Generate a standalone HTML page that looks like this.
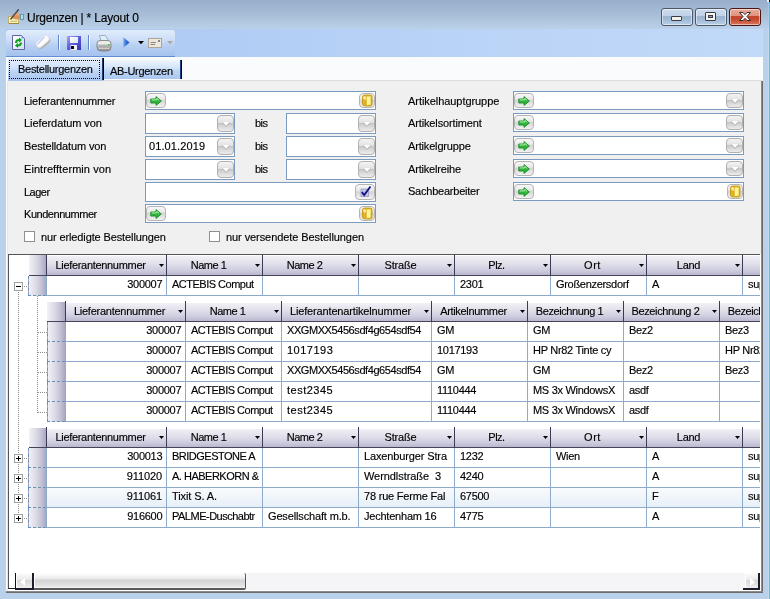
<!DOCTYPE html><html><head><meta charset="utf-8"><style>
*{margin:0;padding:0;box-sizing:border-box}
html,body{width:770px;height:599px;overflow:hidden;background:#b9d1ea;font-family:"Liberation Sans",sans-serif;font-size:11px}
.t{position:absolute;white-space:nowrap;line-height:13px;height:13px;will-change:transform;-webkit-text-stroke:0.15px #000}
.a{position:absolute}
svg.a{overflow:visible}
.inp{position:absolute;background:#fff;border:1px solid #7a9ac0}
.gbtn{position:absolute;width:20px;height:15px;border:1px solid #b4b4b4;border-radius:4px;background:linear-gradient(#f8f8f8,#e8e8e8 40%,#d4d4d4 50%,#ececec 90%,#f4f4f4)}
.dbtn{position:absolute;width:16px;height:17px;border:1px solid #b0b0b0;border-radius:4px;background:linear-gradient(#f4f4f4,#e2e2e2 44%,#c6c6c6 50%,#d8d8d8 70%,#ececec)}
</style></head><body>
<div class="a" style="left:0px;top:0px;width:770px;height:29px;background:linear-gradient(#97afcb,#a6bcd6 45%,#bad1e9)"></div>
<div class="a" style="left:768px;top:0px;width:1px;height:599px;background:linear-gradient(#a4bcd6,#bcd2ea 28px,#cbd8ea 30px)"></div>
<div class="a" style="left:769px;top:0px;width:1px;height:599px;background:#40c8ee"></div>
<div class="a" style="left:767px;top:0px;width:3px;height:2px;background:#e8f8ff"></div>
<div class="a" style="left:769px;top:0px;width:1px;height:2px;background:#000"></div>
<svg class="a" style="left:4px;top:4px" width="24" height="24" viewBox="0 0 24 24">
<rect x="4.5" y="12.5" width="10" height="7" fill="#f6efb0" stroke="#c0b070"/>
<path d="M5 19.5 H15" stroke="#9a8a40"/>
<path d="M6.5 17.3 H13" stroke="#c8b878"/>
<rect x="16.5" y="10.5" width="3" height="5" fill="#b0e0f0" stroke="#6a9aaa"/>
<path d="M7.5 12.5 Q9 9 12 9 L16 10 V15 L12 15.5 Q9.5 15 7.5 13.5Z" fill="#e0905a"/>
<path d="M10 11 Q12 10 15 11" stroke="#f4c090" fill="none"/>
<path d="M6.6 15.4 L14.6 5.4" stroke="#2a2a2a" stroke-width="1.3"/>
<path d="M7.5 14 L13 7" stroke="#8a8a8a" stroke-width=".5"/>
</svg>
<div class="t" style="left:27px;top:12px;font-size:12px;color:#000;letter-spacing:-0.200px;">Urgenzen | * Layout 0</div>
<div class="a" style="left:661px;top:8px;width:32px;height:18px;border:1px solid #4c5868;border-radius:3px;background:linear-gradient(#cddcee,#bfd1e7 45%,#99b3cf 47%,#a3bcd7 70%,#bbd0e7);box-shadow:inset 0 0 0 1px rgba(255,255,255,.5)"></div>
<div class="a" style="left:695px;top:8px;width:32px;height:18px;border:1px solid #4c5868;border-radius:3px;background:linear-gradient(#cddcee,#bfd1e7 45%,#99b3cf 47%,#a3bcd7 70%,#bbd0e7);box-shadow:inset 0 0 0 1px rgba(255,255,255,.5)"></div>
<div class="a" style="left:729px;top:8px;width:32px;height:18px;border:1px solid #4a1616;border-radius:3px;background:linear-gradient(#eaab9c,#e0907c 45%,#c2432a 47%,#c44a30 65%,#d9785e);box-shadow:inset 0 0 0 1px rgba(255,255,255,.5)"></div>
<div class="a" style="left:671px;top:16px;width:11px;height:5px;background:#f4f2ec;border:1px solid #3a3a46;border-radius:1px"></div>
<div class="a" style="left:705px;top:12px;width:11px;height:9px;border:1px solid #3a3a46;border-radius:1px;background:#f4f2ec"><div style="position:absolute;left:2px;top:2px;width:5px;height:3px;background:#8aa0bc;border:1px solid #3a3a46"></div></div>
<svg class="a" style="left:738px;top:11px" width="14" height="11" viewBox="0 0 14 11">
<path d="M1.5 1.5 H5 L7 3.6 L9 1.5 H12.5 L9 5.5 L12.5 9.5 H9 L7 7.4 L5 9.5 H1.5 L5 5.5 Z" fill="#f8f4f2" stroke="#3a2a2a" stroke-width="1" stroke-linejoin="round"/>
</svg>
<div class="a" style="left:6px;top:29px;width:757px;height:28px;background:linear-gradient(90deg,#a8c5f2,#b2cdf5 30%,#bcd5f7 70%,#c2d9f8)"></div>
<div class="a" style="left:6px;top:30px;width:169px;height:27px;background:linear-gradient(#e2edfc,#cfdff8 35%,#b8d0f3 60%,#a4c2ee);border-radius:3px 3px 0 0;border-bottom:1px solid #5f8fd0"></div>
<svg class="a" style="left:12px;top:35px" width="14" height="16" viewBox="0 0 14 16">
<defs><linearGradient id="dg" x1="0" y1="0" x2="1" y2="1"><stop offset="0" stop-color="#ffffff"/><stop offset="1" stop-color="#cfe0f6"/></linearGradient></defs>
<path d="M.5 .5 H9.5 L12.5 3.5 V14.5 H.5 Z" fill="url(#dg)" stroke="#6464a0"/>
<path d="M9.5 .5 L12.5 3.5 H9.5Z" fill="#6aa0e0"/>
<path d="M3 8 Q3 4 7 4 V2.5 L10 5 L7 7.5 V6 Q5 6 5 8Z" fill="#10a018"/>
<path d="M10 7.5 Q10 11.5 6 11.5 V13 L3 10.5 L6 8 V9.5 Q8 9.5 8 7.5Z" fill="#10a018"/>
</svg>
<svg class="a" style="left:36px;top:36px" width="15" height="13" viewBox="0 0 15 13">
<g transform="rotate(-40 7.5 6.5)"><rect x="0" y="2.5" width="15" height="8" rx="3.8" fill="#b4b4b4"/><rect x="0" y="2" width="15" height="6.5" rx="3.2" fill="#fbfbfb" stroke="#d4d4d4" stroke-width=".5"/></g>
<path d="M1.2 8.6 L8.2 1.2" stroke="#5a7ae0" stroke-width=".6"/>
</svg>
<div class="a" style="left:58px;top:35px;width:1px;height:15px;background:#5f88c8;box-shadow:1px 0 0 #f4f8ff"></div>
<svg class="a" style="left:67px;top:36px" width="14" height="14" viewBox="0 0 14 14">
<defs><linearGradient id="fg" x1="0" y1="0" x2="1" y2="1"><stop offset="0" stop-color="#a8a8f4"/><stop offset=".45" stop-color="#6060dc"/><stop offset="1" stop-color="#3434b0"/></linearGradient>
<linearGradient id="lg" x1="0" y1="0" x2="1" y2="1"><stop offset="0" stop-color="#ffffff"/><stop offset="1" stop-color="#d8e4f4"/></linearGradient></defs>
<rect x="0" y="0" width="14" height="14" fill="url(#fg)"/>
<rect x="3" y="1" width="8" height="6" fill="url(#lg)"/>
<rect x="3.5" y="9" width="6.5" height="5" fill="#f0f0f4"/>
<rect x="4" y="10" width="3" height="3" fill="#080818"/>
</svg>
<div class="a" style="left:88px;top:35px;width:1px;height:15px;background:#5f88c8;box-shadow:1px 0 0 #f4f8ff"></div>
<svg class="a" style="left:96px;top:35px" width="16" height="17" viewBox="0 0 16 17">
<defs><linearGradient id="prg" x1="0" y1="0" x2="0" y2="1"><stop offset="0" stop-color="#f4f4f4"/><stop offset=".5" stop-color="#c4c4c4"/><stop offset="1" stop-color="#8c8c8c"/></linearGradient></defs>
<path d="M3.5 .5 H9.5 L12.5 6 H5 Z" fill="#dceefa" stroke="#8ca4b8" stroke-width=".8"/>
<path d="M1 8.5 Q1 5.5 4 5.5 H12 Q15 5.5 15 8.5 V12 Q15 16 11 16 H5 Q1 16 1 12 Z" fill="url(#prg)" stroke="#7a7a7a" stroke-width=".8"/>
<path d="M2 8.2 H14" stroke="#fafafa" stroke-width="1"/>
<path d="M2.5 11 H13.5" stroke="#9a9a9a" stroke-width=".8"/>
<path d="M2.5 13.5 H13.5" stroke="#d8d8d8" stroke-width=".8"/>
<rect x="12" y="9" width="1.6" height="1.4" fill="#30c040"/>
</svg>
<svg class="a" style="left:123px;top:37px" width="7" height="11" viewBox="0 0 7 11">
<defs><linearGradient id="pg" x1="0" y1="0" x2="1" y2="0"><stop offset="0" stop-color="#9cc8f8"/><stop offset=".4" stop-color="#3a78e0"/><stop offset="1" stop-color="#2048c0"/></linearGradient></defs>
<path d="M0 0 L6.5 5.5 L0 11 Z" fill="url(#pg)"/>
</svg>
<svg class="a" style="left:138px;top:41px" width="6" height="4" viewBox="0 0 6 4"><path d="M0 0H6L3 3.2Z" fill="#000"/></svg>
<svg class="a" style="left:148px;top:38px" width="14" height="10" viewBox="0 0 14 10">
<rect x=".5" y=".5" width="13" height="9" fill="#ece8dc" stroke="#aaa69a"/>
<path d="M2.5 4.5 H8 M2.5 6.5 H7" stroke="#8c8880"/>
<rect x="10" y="2" width="2" height="2" fill="#8c8880"/>
</svg>
<svg class="a" style="left:167px;top:41px" width="6" height="4" viewBox="0 0 6 4"><path d="M0 0H6L3 3.2Z" fill="#a8a8a8"/></svg>
<div class="a" style="left:6px;top:57px;width:757px;height:24px;background:#fafbfd"></div>
<div class="a" style="left:104px;top:80px;width:658px;height:1px;background:#dcdcdc"></div>
<div class="a" style="left:8px;top:58px;width:96px;height:23px;background:linear-gradient(#e8f0fc,#d0e1f8 40%,#bcd4f4 60%,#a8c6f0)"></div>
<div class="a" style="left:102px;top:58px;width:1px;height:22px;background:#1c3c70"></div>
<div class="a" style="left:103px;top:58px;width:1px;height:22px;background:#000"></div>
<div class="a" style="left:9px;top:60px;width:91px;height:19px;border:1px dotted #000"></div>
<div class="t" style="left:18px;top:63px;font-size:11px;color:#000;letter-spacing:-0.286px;">Bestellurgenzen</div>
<div class="a" style="left:104px;top:60px;width:76px;height:19px;background:linear-gradient(#f0f6fe,#d4e4f9 40%,#bcd4f4 60%,#aac7f0)"></div>
<div class="a" style="left:180px;top:60px;width:1px;height:19px;background:#1c3c80"></div>
<div class="a" style="left:181px;top:60px;width:1px;height:19px;background:#000"></div>
<div class="t" style="left:110px;top:65px;font-size:11px;color:#000;letter-spacing:-0.300px;">AB-Urgenzen</div>
<div class="a" style="left:6px;top:81px;width:757px;height:512px;background:#f0f0f0"></div>
<div class="a" style="left:6px;top:81px;width:1px;height:512px;background:#fcfcfc"></div>
<div class="a" style="left:7px;top:81px;width:1px;height:510px;background:#e6e6e6"></div>
<div class="a" style="left:761px;top:81px;width:1px;height:512px;background:#8c8c8c"></div>
<div class="a" style="left:762px;top:81px;width:1px;height:512px;background:#6a6a6a"></div>
<div class="a" style="left:6px;top:591px;width:757px;height:1px;background:#8a8a8a"></div>
<div class="a" style="left:6px;top:592px;width:757px;height:1px;background:#6c6c6c"></div>
<div class="t" style="left:24px;top:95px;font-size:11px;color:#000;letter-spacing:-0.250px;">Lieferantennummer</div>
<div class="t" style="left:24px;top:117px;font-size:11px;color:#000;letter-spacing:-0.071px;">Lieferdatum von</div>
<div class="t" style="left:24px;top:140px;font-size:11px;color:#000;letter-spacing:-0.133px;">Bestelldatum von</div>
<div class="t" style="left:24px;top:163px;font-size:11px;color:#000;letter-spacing:0.059px;">Eintrefftermin von</div>
<div class="t" style="left:24px;top:186px;font-size:11px;color:#000;letter-spacing:-0.500px;">Lager</div>
<div class="t" style="left:24px;top:208px;font-size:11px;color:#000;letter-spacing:-0.455px;">Kundennummer</div>
<div class="t" style="left:408px;top:95px;font-size:11px;color:#000;letter-spacing:-0.059px;">Artikelhauptgruppe</div>
<div class="t" style="left:408px;top:117px;font-size:11px;color:#000;letter-spacing:-0.133px;">Artikelsortiment</div>
<div class="t" style="left:408px;top:140px;font-size:11px;color:#000;letter-spacing:-0.167px;">Artikelgruppe</div>
<div class="t" style="left:408px;top:163px;font-size:11px;color:#000;letter-spacing:-0.182px;">Artikelreihe</div>
<div class="t" style="left:408px;top:185px;font-size:11px;color:#000;letter-spacing:-0.231px;">Sachbearbeiter</div>
<div class="inp" style="left:145px;top:91px;width:231px;height:19px"></div>
<div class="gbtn" style="left:146px;top:93px"></div>
<svg class="a" style="left:150px;top:96px" width="12" height="10" viewBox="0 0 12 10">
<path d="M.8 3 H6 V.6 L11.3 5 L6 9.4 V7 H.8 Z" fill="#30b43c" stroke="#1a8a26" stroke-width=".9" stroke-linejoin="round"/>
<path d="M1.6 3.9 H6.8 V2.4 L9.2 4.4" stroke="#b0f4b0" stroke-width="1" fill="none"/>
</svg>
<div class="gbtn" style="left:359px;top:93px;width:16px"></div>
<svg class="a" style="left:361px;top:94px" width="12" height="13" viewBox="0 0 12 13">
<path d="M1.5 3 Q1.5 1 3.5 1 H9.5 Q11 1 11 2.5 V10.5 Q11 12 9.5 12 H4 Q1.5 12 1.5 10Z" fill="#e4b41c" stroke="#c09012" stroke-width=".8"/>
<path d="M5.2 2.8 L9.6 2.2 V10.6 L5.2 11.2Z" fill="#fff69a"/>
<path d="M2 3.2 Q3 1.6 5.2 2.8 V6 L3.6 5.6 Q2.4 4.6 2 3.2Z" fill="#fff2b0"/>
<path d="M5.2 2.8 V11.2" stroke="#c89818" stroke-width=".7"/>
</svg>
<div class="inp" style="left:145px;top:113px;width:90px;height:21px"></div>
<div class="dbtn" style="left:217px;top:115px;width:17px;height:17px"></div>
<svg class="a" style="left:222px;top:122px" width="8" height="5" viewBox="0 0 8 5"><path d="M-.3 .3H8.3L4 4.9Z" fill="#a8a8a8" opacity=".7"/><path d="M.5 0H7.5L4 3.8Z" fill="#ffffff"/></svg>
<div class="t" style="left:255px;top:117px;font-size:11px;color:#000;letter-spacing:-0.500px;">bis</div>
<div class="inp" style="left:286px;top:113px;width:90px;height:21px"></div>
<div class="dbtn" style="left:358px;top:115px;width:17px;height:17px"></div>
<svg class="a" style="left:363px;top:122px" width="8" height="5" viewBox="0 0 8 5"><path d="M-.3 .3H8.3L4 4.9Z" fill="#a8a8a8" opacity=".7"/><path d="M.5 0H7.5L4 3.8Z" fill="#ffffff"/></svg>
<div class="inp" style="left:145px;top:136px;width:90px;height:21px"></div>
<div class="dbtn" style="left:217px;top:138px;width:17px;height:17px"></div>
<svg class="a" style="left:222px;top:145px" width="8" height="5" viewBox="0 0 8 5"><path d="M-.3 .3H8.3L4 4.9Z" fill="#a8a8a8" opacity=".7"/><path d="M.5 0H7.5L4 3.8Z" fill="#ffffff"/></svg>
<div class="t" style="left:255px;top:140px;font-size:11px;color:#000;letter-spacing:-0.500px;">bis</div>
<div class="inp" style="left:286px;top:136px;width:90px;height:21px"></div>
<div class="dbtn" style="left:358px;top:138px;width:17px;height:17px"></div>
<svg class="a" style="left:363px;top:145px" width="8" height="5" viewBox="0 0 8 5"><path d="M-.3 .3H8.3L4 4.9Z" fill="#a8a8a8" opacity=".7"/><path d="M.5 0H7.5L4 3.8Z" fill="#ffffff"/></svg>
<div class="inp" style="left:145px;top:159px;width:90px;height:21px"></div>
<div class="dbtn" style="left:217px;top:161px;width:17px;height:17px"></div>
<svg class="a" style="left:222px;top:168px" width="8" height="5" viewBox="0 0 8 5"><path d="M-.3 .3H8.3L4 4.9Z" fill="#a8a8a8" opacity=".7"/><path d="M.5 0H7.5L4 3.8Z" fill="#ffffff"/></svg>
<div class="t" style="left:255px;top:163px;font-size:11px;color:#000;letter-spacing:-0.500px;">bis</div>
<div class="inp" style="left:286px;top:159px;width:90px;height:21px"></div>
<div class="dbtn" style="left:358px;top:161px;width:17px;height:17px"></div>
<svg class="a" style="left:363px;top:168px" width="8" height="5" viewBox="0 0 8 5"><path d="M-.3 .3H8.3L4 4.9Z" fill="#a8a8a8" opacity=".7"/><path d="M.5 0H7.5L4 3.8Z" fill="#ffffff"/></svg>
<div class="t" style="left:149px;top:140px;font-size:11px;color:#000;letter-spacing:0.111px;">01.01.2019</div>
<div class="inp" style="left:145px;top:182px;width:231px;height:20px"></div>
<div class="gbtn" style="left:355px;top:184px;width:20px;height:16px"></div>
<svg class="a" style="left:360px;top:185px" width="12" height="12" viewBox="0 0 12 12">
<rect x="1" y="4" width="7.5" height="7.5" fill="#c4c4dc" stroke="#9a9ac0" stroke-width=".8"/>
<path d="M1.8 7.2 L4.2 10 L10.5 1.5" stroke="#14148a" stroke-width="1.9" fill="none"/>
</svg>
<div class="inp" style="left:145px;top:204px;width:231px;height:19px"></div>
<div class="gbtn" style="left:146px;top:206px"></div>
<svg class="a" style="left:150px;top:209px" width="12" height="10" viewBox="0 0 12 10">
<path d="M.8 3 H6 V.6 L11.3 5 L6 9.4 V7 H.8 Z" fill="#30b43c" stroke="#1a8a26" stroke-width=".9" stroke-linejoin="round"/>
<path d="M1.6 3.9 H6.8 V2.4 L9.2 4.4" stroke="#b0f4b0" stroke-width="1" fill="none"/>
</svg>
<div class="gbtn" style="left:359px;top:206px;width:16px"></div>
<svg class="a" style="left:361px;top:207px" width="12" height="13" viewBox="0 0 12 13">
<path d="M1.5 3 Q1.5 1 3.5 1 H9.5 Q11 1 11 2.5 V10.5 Q11 12 9.5 12 H4 Q1.5 12 1.5 10Z" fill="#e4b41c" stroke="#c09012" stroke-width=".8"/>
<path d="M5.2 2.8 L9.6 2.2 V10.6 L5.2 11.2Z" fill="#fff69a"/>
<path d="M2 3.2 Q3 1.6 5.2 2.8 V6 L3.6 5.6 Q2.4 4.6 2 3.2Z" fill="#fff2b0"/>
<path d="M5.2 2.8 V11.2" stroke="#c89818" stroke-width=".7"/>
</svg>
<div class="inp" style="left:513px;top:91px;width:231px;height:19px"></div>
<div class="gbtn" style="left:514px;top:93px"></div>
<svg class="a" style="left:518px;top:96px" width="12" height="10" viewBox="0 0 12 10">
<path d="M.8 3 H6 V.6 L11.3 5 L6 9.4 V7 H.8 Z" fill="#30b43c" stroke="#1a8a26" stroke-width=".9" stroke-linejoin="round"/>
<path d="M1.6 3.9 H6.8 V2.4 L9.2 4.4" stroke="#b0f4b0" stroke-width="1" fill="none"/>
</svg>
<div class="dbtn" style="left:726px;top:93px;width:17px;height:15px"></div>
<svg class="a" style="left:731px;top:99px" width="8" height="5" viewBox="0 0 8 5"><path d="M-.3 .3H8.3L4 4.9Z" fill="#a8a8a8" opacity=".7"/><path d="M.5 0H7.5L4 3.8Z" fill="#ffffff"/></svg>
<div class="inp" style="left:513px;top:113px;width:231px;height:19px"></div>
<div class="gbtn" style="left:514px;top:115px"></div>
<svg class="a" style="left:518px;top:118px" width="12" height="10" viewBox="0 0 12 10">
<path d="M.8 3 H6 V.6 L11.3 5 L6 9.4 V7 H.8 Z" fill="#30b43c" stroke="#1a8a26" stroke-width=".9" stroke-linejoin="round"/>
<path d="M1.6 3.9 H6.8 V2.4 L9.2 4.4" stroke="#b0f4b0" stroke-width="1" fill="none"/>
</svg>
<div class="dbtn" style="left:726px;top:115px;width:17px;height:15px"></div>
<svg class="a" style="left:731px;top:121px" width="8" height="5" viewBox="0 0 8 5"><path d="M-.3 .3H8.3L4 4.9Z" fill="#a8a8a8" opacity=".7"/><path d="M.5 0H7.5L4 3.8Z" fill="#ffffff"/></svg>
<div class="inp" style="left:513px;top:136px;width:231px;height:19px"></div>
<div class="gbtn" style="left:514px;top:138px"></div>
<svg class="a" style="left:518px;top:141px" width="12" height="10" viewBox="0 0 12 10">
<path d="M.8 3 H6 V.6 L11.3 5 L6 9.4 V7 H.8 Z" fill="#30b43c" stroke="#1a8a26" stroke-width=".9" stroke-linejoin="round"/>
<path d="M1.6 3.9 H6.8 V2.4 L9.2 4.4" stroke="#b0f4b0" stroke-width="1" fill="none"/>
</svg>
<div class="dbtn" style="left:726px;top:138px;width:17px;height:15px"></div>
<svg class="a" style="left:731px;top:144px" width="8" height="5" viewBox="0 0 8 5"><path d="M-.3 .3H8.3L4 4.9Z" fill="#a8a8a8" opacity=".7"/><path d="M.5 0H7.5L4 3.8Z" fill="#ffffff"/></svg>
<div class="inp" style="left:513px;top:159px;width:231px;height:19px"></div>
<div class="gbtn" style="left:514px;top:161px"></div>
<svg class="a" style="left:518px;top:164px" width="12" height="10" viewBox="0 0 12 10">
<path d="M.8 3 H6 V.6 L11.3 5 L6 9.4 V7 H.8 Z" fill="#30b43c" stroke="#1a8a26" stroke-width=".9" stroke-linejoin="round"/>
<path d="M1.6 3.9 H6.8 V2.4 L9.2 4.4" stroke="#b0f4b0" stroke-width="1" fill="none"/>
</svg>
<div class="dbtn" style="left:726px;top:161px;width:17px;height:15px"></div>
<svg class="a" style="left:731px;top:167px" width="8" height="5" viewBox="0 0 8 5"><path d="M-.3 .3H8.3L4 4.9Z" fill="#a8a8a8" opacity=".7"/><path d="M.5 0H7.5L4 3.8Z" fill="#ffffff"/></svg>
<div class="inp" style="left:513px;top:182px;width:231px;height:19px"></div>
<div class="gbtn" style="left:514px;top:184px"></div>
<svg class="a" style="left:518px;top:187px" width="12" height="10" viewBox="0 0 12 10">
<path d="M.8 3 H6 V.6 L11.3 5 L6 9.4 V7 H.8 Z" fill="#30b43c" stroke="#1a8a26" stroke-width=".9" stroke-linejoin="round"/>
<path d="M1.6 3.9 H6.8 V2.4 L9.2 4.4" stroke="#b0f4b0" stroke-width="1" fill="none"/>
</svg>
<div class="gbtn" style="left:727px;top:184px;width:16px"></div>
<svg class="a" style="left:729px;top:185px" width="12" height="13" viewBox="0 0 12 13">
<path d="M1.5 3 Q1.5 1 3.5 1 H9.5 Q11 1 11 2.5 V10.5 Q11 12 9.5 12 H4 Q1.5 12 1.5 10Z" fill="#e4b41c" stroke="#c09012" stroke-width=".8"/>
<path d="M5.2 2.8 L9.6 2.2 V10.6 L5.2 11.2Z" fill="#fff69a"/>
<path d="M2 3.2 Q3 1.6 5.2 2.8 V6 L3.6 5.6 Q2.4 4.6 2 3.2Z" fill="#fff2b0"/>
<path d="M5.2 2.8 V11.2" stroke="#c89818" stroke-width=".7"/>
</svg>
<div class="a" style="left:24px;top:231px;width:11px;height:11px;background:#fff;border:1px solid #8e8f8f"></div>
<div class="t" style="left:41px;top:231px;font-size:11px;color:#000;letter-spacing:-0.120px;">nur erledigte Bestellungen</div>
<div class="a" style="left:209px;top:231px;width:11px;height:11px;background:#fff;border:1px solid #8e8f8f"></div>
<div class="t" style="left:226px;top:231px;font-size:11px;color:#000;letter-spacing:-0.077px;">nur versendete Bestellungen</div>
<div class="a" style="left:8px;top:254px;width:753px;height:337px;background:#fff"></div>
<div class="a" style="left:8px;top:254px;width:752px;height:1px;background:#555"></div>
<div class="a" style="left:8px;top:254px;width:1px;height:335px;background:#555"></div>
<div class="a" style="left:0;top:0;width:760px;height:588px;overflow:hidden">
<div class="a" style="left:29px;top:255px;width:17px;height:20px;background:linear-gradient(90deg,#f2f1f7,#dcdbe7 40%,#c2c0d4 75%,#a9a7c0)"></div>
<div class="a" style="left:46px;top:255px;width:120px;height:20px;background:linear-gradient(#f4f3f8,#e0dfea 45%,#cfcde0 75%,#bab8ce);box-shadow:inset 1px 1px 0 #fff"></div>
<div class="a" style="left:46px;top:255px;width:1px;height:20px;background:#3c3b56"></div>
<div class="t" style="left:46px;width:109px;text-align:center;top:259px;font-size:11px;color:#000;letter-spacing:-0.312px;">Lieferantennummer</div>
<svg class="a" style="left:159px;top:264px" width="5" height="3" viewBox="0 0 5 3"><path d="M0 0H5L2.5 3Z" fill="#000"/></svg>
<div class="a" style="left:166px;top:255px;width:96px;height:20px;background:linear-gradient(#f4f3f8,#e0dfea 45%,#cfcde0 75%,#bab8ce);box-shadow:inset 1px 1px 0 #fff"></div>
<div class="a" style="left:166px;top:255px;width:1px;height:20px;background:#3c3b56"></div>
<div class="t" style="left:166px;width:85px;text-align:center;top:259px;font-size:11px;color:#000;letter-spacing:-0.500px;">Name 1</div>
<svg class="a" style="left:255px;top:264px" width="5" height="3" viewBox="0 0 5 3"><path d="M0 0H5L2.5 3Z" fill="#000"/></svg>
<div class="a" style="left:262px;top:255px;width:96px;height:20px;background:linear-gradient(#f4f3f8,#e0dfea 45%,#cfcde0 75%,#bab8ce);box-shadow:inset 1px 1px 0 #fff"></div>
<div class="a" style="left:262px;top:255px;width:1px;height:20px;background:#3c3b56"></div>
<div class="t" style="left:262px;width:85px;text-align:center;top:259px;font-size:11px;color:#000;letter-spacing:-0.500px;">Name 2</div>
<svg class="a" style="left:351px;top:264px" width="5" height="3" viewBox="0 0 5 3"><path d="M0 0H5L2.5 3Z" fill="#000"/></svg>
<div class="a" style="left:358px;top:255px;width:96px;height:20px;background:linear-gradient(#f4f3f8,#e0dfea 45%,#cfcde0 75%,#bab8ce);box-shadow:inset 1px 1px 0 #fff"></div>
<div class="a" style="left:358px;top:255px;width:1px;height:20px;background:#3c3b56"></div>
<div class="t" style="left:358px;width:85px;text-align:center;top:259px;font-size:11px;color:#000;letter-spacing:-0.200px;">Stra&szlig;e</div>
<svg class="a" style="left:447px;top:264px" width="5" height="3" viewBox="0 0 5 3"><path d="M0 0H5L2.5 3Z" fill="#000"/></svg>
<div class="a" style="left:454px;top:255px;width:96px;height:20px;background:linear-gradient(#f4f3f8,#e0dfea 45%,#cfcde0 75%,#bab8ce);box-shadow:inset 1px 1px 0 #fff"></div>
<div class="a" style="left:454px;top:255px;width:1px;height:20px;background:#3c3b56"></div>
<div class="t" style="left:454px;width:85px;text-align:center;top:259px;font-size:11px;color:#000;letter-spacing:-0.500px;">Plz.</div>
<svg class="a" style="left:543px;top:264px" width="5" height="3" viewBox="0 0 5 3"><path d="M0 0H5L2.5 3Z" fill="#000"/></svg>
<div class="a" style="left:550px;top:255px;width:96px;height:20px;background:linear-gradient(#f4f3f8,#e0dfea 45%,#cfcde0 75%,#bab8ce);box-shadow:inset 1px 1px 0 #fff"></div>
<div class="a" style="left:550px;top:255px;width:1px;height:20px;background:#3c3b56"></div>
<div class="t" style="left:550px;width:85px;text-align:center;top:259px;font-size:11px;color:#000;letter-spacing:0.500px;">Ort</div>
<svg class="a" style="left:639px;top:264px" width="5" height="3" viewBox="0 0 5 3"><path d="M0 0H5L2.5 3Z" fill="#000"/></svg>
<div class="a" style="left:646px;top:255px;width:96px;height:20px;background:linear-gradient(#f4f3f8,#e0dfea 45%,#cfcde0 75%,#bab8ce);box-shadow:inset 1px 1px 0 #fff"></div>
<div class="a" style="left:646px;top:255px;width:1px;height:20px;background:#3c3b56"></div>
<div class="t" style="left:646px;width:85px;text-align:center;top:259px;font-size:11px;color:#000;letter-spacing:-0.300px;">Land</div>
<svg class="a" style="left:735px;top:264px" width="5" height="3" viewBox="0 0 5 3"><path d="M0 0H5L2.5 3Z" fill="#000"/></svg>
<div class="a" style="left:742px;top:255px;width:96px;height:20px;background:linear-gradient(#f4f3f8,#e0dfea 45%,#cfcde0 75%,#bab8ce);box-shadow:inset 1px 1px 0 #fff"></div>
<div class="a" style="left:742px;top:255px;width:1px;height:20px;background:#3c3b56"></div>
<div class="a" style="left:29px;top:275px;width:731px;height:1px;background:#44435a"></div>
<div class="a" style="left:28px;top:276px;width:18px;height:20px;background:linear-gradient(90deg,#f2f1f7,#dcdbe7 40%,#c2c0d4 75%,#a9a7c0);border-left:1px dashed #6a90b8;border-bottom:1px dashed #6a90b8"></div>
<div class="a" style="left:46px;top:276px;width:714px;height:20px;background:#fff;border-bottom:1px solid #8eabc9"></div>
<div class="a" style="left:46px;top:276px;width:1px;height:20px;background:#8eabc9"></div>
<div class="t" style="left:-138px;width:300.280px;text-align:right;top:278px;font-size:11px;color:#000;letter-spacing:-0.280px;">300007</div>
<div class="a" style="left:166px;top:276px;width:1px;height:20px;background:#8eabc9"></div>
<div class="a" style="left:166px;top:276px;width:96px;height:20px;overflow:hidden">
<div class="t" style="left:6px;top:2px;font-size:11px;color:#000;letter-spacing:-0.500px;">ACTEBIS Comput</div>
</div>
<div class="a" style="left:262px;top:276px;width:1px;height:20px;background:#8eabc9"></div>
<div class="a" style="left:358px;top:276px;width:1px;height:20px;background:#8eabc9"></div>
<div class="a" style="left:454px;top:276px;width:1px;height:20px;background:#8eabc9"></div>
<div class="a" style="left:454px;top:276px;width:96px;height:20px;overflow:hidden">
<div class="t" style="left:6px;top:2px;font-size:11px;color:#000;letter-spacing:-0.300px;">2301</div>
</div>
<div class="a" style="left:550px;top:276px;width:1px;height:20px;background:#8eabc9"></div>
<div class="a" style="left:550px;top:276px;width:96px;height:20px;overflow:hidden">
<div class="t" style="left:6px;top:2px;font-size:11px;color:#000;letter-spacing:-0.300px;">Gro&szlig;enzersdorf</div>
</div>
<div class="a" style="left:646px;top:276px;width:1px;height:20px;background:#8eabc9"></div>
<div class="a" style="left:646px;top:276px;width:96px;height:20px;overflow:hidden">
<div class="t" style="left:6px;top:2px;font-size:11px;color:#000;letter-spacing:-0.300px;">A</div>
</div>
<div class="a" style="left:742px;top:276px;width:1px;height:20px;background:#8eabc9"></div>
<div class="a" style="left:742px;top:276px;width:96px;height:20px;overflow:hidden">
<div class="t" style="left:6px;top:2px;font-size:11px;color:#000;letter-spacing:-0.300px;">sup</div>
</div>
<div class="a" style="left:47px;top:302px;width:18px;height:19px;background:linear-gradient(90deg,#f2f1f7,#dcdbe7 40%,#c2c0d4 75%,#a9a7c0)"></div>
<div class="a" style="left:65px;top:302px;width:120px;height:19px;background:linear-gradient(#f4f3f8,#e0dfea 45%,#cfcde0 75%,#bab8ce);box-shadow:inset 1px 1px 0 #fff"></div>
<div class="a" style="left:65px;top:301px;width:1px;height:20px;background:#3c3b56"></div>
<div class="t" style="left:65px;width:109px;text-align:center;top:305px;font-size:11px;color:#000;letter-spacing:-0.250px;">Lieferantennummer</div>
<svg class="a" style="left:178px;top:310px" width="5" height="3" viewBox="0 0 5 3"><path d="M0 0H5L2.5 3Z" fill="#000"/></svg>
<div class="a" style="left:185px;top:302px;width:96px;height:19px;background:linear-gradient(#f4f3f8,#e0dfea 45%,#cfcde0 75%,#bab8ce);box-shadow:inset 1px 1px 0 #fff"></div>
<div class="a" style="left:185px;top:301px;width:1px;height:20px;background:#3c3b56"></div>
<div class="t" style="left:185px;width:85px;text-align:center;top:305px;font-size:11px;color:#000;letter-spacing:-0.500px;">Name 1</div>
<svg class="a" style="left:274px;top:310px" width="5" height="3" viewBox="0 0 5 3"><path d="M0 0H5L2.5 3Z" fill="#000"/></svg>
<div class="a" style="left:281px;top:302px;width:150px;height:19px;background:linear-gradient(#f4f3f8,#e0dfea 45%,#cfcde0 75%,#bab8ce);box-shadow:inset 1px 1px 0 #fff"></div>
<div class="a" style="left:281px;top:301px;width:1px;height:20px;background:#3c3b56"></div>
<div class="t" style="left:281px;width:139px;text-align:center;top:305px;font-size:11px;color:#000;letter-spacing:-0.152px;">Lieferantenartikelnummer</div>
<svg class="a" style="left:424px;top:310px" width="5" height="3" viewBox="0 0 5 3"><path d="M0 0H5L2.5 3Z" fill="#000"/></svg>
<div class="a" style="left:431px;top:302px;width:96px;height:19px;background:linear-gradient(#f4f3f8,#e0dfea 45%,#cfcde0 75%,#bab8ce);box-shadow:inset 1px 1px 0 #fff"></div>
<div class="a" style="left:431px;top:301px;width:1px;height:20px;background:#3c3b56"></div>
<div class="t" style="left:431px;width:85px;text-align:center;top:305px;font-size:11px;color:#000;letter-spacing:-0.333px;">Artikelnummer</div>
<svg class="a" style="left:520px;top:310px" width="5" height="3" viewBox="0 0 5 3"><path d="M0 0H5L2.5 3Z" fill="#000"/></svg>
<div class="a" style="left:527px;top:302px;width:96px;height:19px;background:linear-gradient(#f4f3f8,#e0dfea 45%,#cfcde0 75%,#bab8ce);box-shadow:inset 1px 1px 0 #fff"></div>
<div class="a" style="left:527px;top:301px;width:1px;height:20px;background:#3c3b56"></div>
<div class="t" style="left:527px;width:85px;text-align:center;top:305px;font-size:11px;color:#000;letter-spacing:-0.417px;">Bezeichnung 1</div>
<svg class="a" style="left:616px;top:310px" width="5" height="3" viewBox="0 0 5 3"><path d="M0 0H5L2.5 3Z" fill="#000"/></svg>
<div class="a" style="left:623px;top:302px;width:96px;height:19px;background:linear-gradient(#f4f3f8,#e0dfea 45%,#cfcde0 75%,#bab8ce);box-shadow:inset 1px 1px 0 #fff"></div>
<div class="a" style="left:623px;top:301px;width:1px;height:20px;background:#3c3b56"></div>
<div class="t" style="left:623px;width:85px;text-align:center;top:305px;font-size:11px;color:#000;letter-spacing:-0.367px;">Bezeichnung 2</div>
<svg class="a" style="left:712px;top:310px" width="5" height="3" viewBox="0 0 5 3"><path d="M0 0H5L2.5 3Z" fill="#000"/></svg>
<div class="a" style="left:719px;top:302px;width:96px;height:19px;background:linear-gradient(#f4f3f8,#e0dfea 45%,#cfcde0 75%,#bab8ce);box-shadow:inset 1px 1px 0 #fff"></div>
<div class="a" style="left:719px;top:301px;width:1px;height:20px;background:#3c3b56"></div>
<div class="t" style="left:719px;width:85px;text-align:center;top:305px;font-size:11px;color:#000;letter-spacing:-0.417px;">Bezeichnung 3</div>
<svg class="a" style="left:808px;top:310px" width="5" height="3" viewBox="0 0 5 3"><path d="M0 0H5L2.5 3Z" fill="#000"/></svg>
<div class="a" style="left:47px;top:321px;width:713px;height:1px;background:#44435a"></div>
<div class="a" style="left:47px;top:322px;width:18px;height:20px;background:linear-gradient(90deg,#f2f1f7,#dcdbe7 40%,#c2c0d4 75%,#a9a7c0);border-left:1px dashed #6a90b8;border-bottom:1px dashed #6a90b8"></div>
<div class="a" style="left:65px;top:322px;width:695px;height:20px;background:#fff;border-bottom:1px solid #8eabc9"></div>
<div class="a" style="left:65px;top:322px;width:1px;height:20px;background:#8eabc9"></div>
<div class="t" style="left:-119px;width:300.280px;text-align:right;top:324px;font-size:11px;color:#000;letter-spacing:-0.280px;">300007</div>
<div class="a" style="left:185px;top:322px;width:1px;height:20px;background:#8eabc9"></div>
<div class="a" style="left:185px;top:322px;width:96px;height:20px;overflow:hidden">
<div class="t" style="left:6px;top:2px;font-size:11px;color:#000;letter-spacing:-0.500px;">ACTEBIS Comput</div>
</div>
<div class="a" style="left:281px;top:322px;width:1px;height:20px;background:#8eabc9"></div>
<div class="a" style="left:281px;top:322px;width:150px;height:20px;overflow:hidden">
<div class="t" style="left:6px;top:2px;font-size:11px;color:#000;letter-spacing:-0.423px;">XXGMXX5456sdf4g654sdf54</div>
</div>
<div class="a" style="left:431px;top:322px;width:1px;height:20px;background:#8eabc9"></div>
<div class="a" style="left:431px;top:322px;width:96px;height:20px;overflow:hidden">
<div class="t" style="left:6px;top:2px;font-size:11px;color:#000;letter-spacing:-0.300px;">GM</div>
</div>
<div class="a" style="left:527px;top:322px;width:1px;height:20px;background:#8eabc9"></div>
<div class="a" style="left:527px;top:322px;width:96px;height:20px;overflow:hidden">
<div class="t" style="left:6px;top:2px;font-size:11px;color:#000;letter-spacing:-0.300px;">GM</div>
</div>
<div class="a" style="left:623px;top:322px;width:1px;height:20px;background:#8eabc9"></div>
<div class="a" style="left:623px;top:322px;width:96px;height:20px;overflow:hidden">
<div class="t" style="left:6px;top:2px;font-size:11px;color:#000;letter-spacing:-0.300px;">Bez2</div>
</div>
<div class="a" style="left:719px;top:322px;width:1px;height:20px;background:#8eabc9"></div>
<div class="a" style="left:719px;top:322px;width:96px;height:20px;overflow:hidden">
<div class="t" style="left:6px;top:2px;font-size:11px;color:#000;letter-spacing:-0.300px;">Bez3</div>
</div>
<div class="a" style="left:47px;top:342px;width:18px;height:20px;background:linear-gradient(90deg,#f2f1f7,#dcdbe7 40%,#c2c0d4 75%,#a9a7c0);border-left:1px dashed #6a90b8;border-bottom:1px dashed #6a90b8"></div>
<div class="a" style="left:65px;top:342px;width:695px;height:20px;background:#fff;border-bottom:1px solid #8eabc9"></div>
<div class="a" style="left:65px;top:342px;width:1px;height:20px;background:#8eabc9"></div>
<div class="t" style="left:-119px;width:300.280px;text-align:right;top:344px;font-size:11px;color:#000;letter-spacing:-0.280px;">300007</div>
<div class="a" style="left:185px;top:342px;width:1px;height:20px;background:#8eabc9"></div>
<div class="a" style="left:185px;top:342px;width:96px;height:20px;overflow:hidden">
<div class="t" style="left:6px;top:2px;font-size:11px;color:#000;letter-spacing:-0.500px;">ACTEBIS Comput</div>
</div>
<div class="a" style="left:281px;top:342px;width:1px;height:20px;background:#8eabc9"></div>
<div class="a" style="left:281px;top:342px;width:150px;height:20px;overflow:hidden">
<div class="t" style="left:6px;top:2px;font-size:11px;color:#000;letter-spacing:0.500px;">1017193</div>
</div>
<div class="a" style="left:431px;top:342px;width:1px;height:20px;background:#8eabc9"></div>
<div class="a" style="left:431px;top:342px;width:96px;height:20px;overflow:hidden">
<div class="t" style="left:6px;top:2px;font-size:11px;color:#000;letter-spacing:-0.300px;">1017193</div>
</div>
<div class="a" style="left:527px;top:342px;width:1px;height:20px;background:#8eabc9"></div>
<div class="a" style="left:527px;top:342px;width:96px;height:20px;overflow:hidden">
<div class="t" style="left:6px;top:2px;font-size:11px;color:#000;letter-spacing:-0.300px;">HP Nr82 Tinte cy</div>
</div>
<div class="a" style="left:623px;top:342px;width:1px;height:20px;background:#8eabc9"></div>
<div class="a" style="left:719px;top:342px;width:1px;height:20px;background:#8eabc9"></div>
<div class="a" style="left:719px;top:342px;width:96px;height:20px;overflow:hidden">
<div class="t" style="left:6px;top:2px;font-size:11px;color:#000;letter-spacing:-0.300px;">HP Nr82 Tinte</div>
</div>
<div class="a" style="left:47px;top:362px;width:18px;height:20px;background:linear-gradient(90deg,#f2f1f7,#dcdbe7 40%,#c2c0d4 75%,#a9a7c0);border-left:1px dashed #6a90b8;border-bottom:1px dashed #6a90b8"></div>
<div class="a" style="left:65px;top:362px;width:695px;height:20px;background:#fff;border-bottom:1px solid #8eabc9"></div>
<div class="a" style="left:65px;top:362px;width:1px;height:20px;background:#8eabc9"></div>
<div class="t" style="left:-119px;width:300.280px;text-align:right;top:364px;font-size:11px;color:#000;letter-spacing:-0.280px;">300007</div>
<div class="a" style="left:185px;top:362px;width:1px;height:20px;background:#8eabc9"></div>
<div class="a" style="left:185px;top:362px;width:96px;height:20px;overflow:hidden">
<div class="t" style="left:6px;top:2px;font-size:11px;color:#000;letter-spacing:-0.500px;">ACTEBIS Comput</div>
</div>
<div class="a" style="left:281px;top:362px;width:1px;height:20px;background:#8eabc9"></div>
<div class="a" style="left:281px;top:362px;width:150px;height:20px;overflow:hidden">
<div class="t" style="left:6px;top:2px;font-size:11px;color:#000;letter-spacing:-0.423px;">XXGMXX5456sdf4g654sdf54</div>
</div>
<div class="a" style="left:431px;top:362px;width:1px;height:20px;background:#8eabc9"></div>
<div class="a" style="left:431px;top:362px;width:96px;height:20px;overflow:hidden">
<div class="t" style="left:6px;top:2px;font-size:11px;color:#000;letter-spacing:-0.300px;">GM</div>
</div>
<div class="a" style="left:527px;top:362px;width:1px;height:20px;background:#8eabc9"></div>
<div class="a" style="left:527px;top:362px;width:96px;height:20px;overflow:hidden">
<div class="t" style="left:6px;top:2px;font-size:11px;color:#000;letter-spacing:-0.300px;">GM</div>
</div>
<div class="a" style="left:623px;top:362px;width:1px;height:20px;background:#8eabc9"></div>
<div class="a" style="left:623px;top:362px;width:96px;height:20px;overflow:hidden">
<div class="t" style="left:6px;top:2px;font-size:11px;color:#000;letter-spacing:-0.300px;">Bez2</div>
</div>
<div class="a" style="left:719px;top:362px;width:1px;height:20px;background:#8eabc9"></div>
<div class="a" style="left:719px;top:362px;width:96px;height:20px;overflow:hidden">
<div class="t" style="left:6px;top:2px;font-size:11px;color:#000;letter-spacing:-0.300px;">Bez3</div>
</div>
<div class="a" style="left:47px;top:382px;width:18px;height:20px;background:linear-gradient(90deg,#f2f1f7,#dcdbe7 40%,#c2c0d4 75%,#a9a7c0);border-left:1px dashed #6a90b8;border-bottom:1px dashed #6a90b8"></div>
<div class="a" style="left:65px;top:382px;width:695px;height:20px;background:#fff;border-bottom:1px solid #8eabc9"></div>
<div class="a" style="left:65px;top:382px;width:1px;height:20px;background:#8eabc9"></div>
<div class="t" style="left:-119px;width:300.280px;text-align:right;top:384px;font-size:11px;color:#000;letter-spacing:-0.280px;">300007</div>
<div class="a" style="left:185px;top:382px;width:1px;height:20px;background:#8eabc9"></div>
<div class="a" style="left:185px;top:382px;width:96px;height:20px;overflow:hidden">
<div class="t" style="left:6px;top:2px;font-size:11px;color:#000;letter-spacing:-0.500px;">ACTEBIS Comput</div>
</div>
<div class="a" style="left:281px;top:382px;width:1px;height:20px;background:#8eabc9"></div>
<div class="a" style="left:281px;top:382px;width:150px;height:20px;overflow:hidden">
<div class="t" style="left:6px;top:2px;font-size:11px;color:#000;letter-spacing:0.500px;">test2345</div>
</div>
<div class="a" style="left:431px;top:382px;width:1px;height:20px;background:#8eabc9"></div>
<div class="a" style="left:431px;top:382px;width:96px;height:20px;overflow:hidden">
<div class="t" style="left:6px;top:2px;font-size:11px;color:#000;letter-spacing:-0.300px;">1110444</div>
</div>
<div class="a" style="left:527px;top:382px;width:1px;height:20px;background:#8eabc9"></div>
<div class="a" style="left:527px;top:382px;width:96px;height:20px;overflow:hidden">
<div class="t" style="left:6px;top:2px;font-size:11px;color:#000;letter-spacing:-0.300px;">MS 3x WindowsX</div>
</div>
<div class="a" style="left:623px;top:382px;width:1px;height:20px;background:#8eabc9"></div>
<div class="a" style="left:623px;top:382px;width:96px;height:20px;overflow:hidden">
<div class="t" style="left:6px;top:2px;font-size:11px;color:#000;letter-spacing:-0.300px;">asdf</div>
</div>
<div class="a" style="left:719px;top:382px;width:1px;height:20px;background:#8eabc9"></div>
<div class="a" style="left:47px;top:402px;width:18px;height:20px;background:linear-gradient(90deg,#f2f1f7,#dcdbe7 40%,#c2c0d4 75%,#a9a7c0);border-left:1px dashed #6a90b8;border-bottom:1px dashed #6a90b8"></div>
<div class="a" style="left:65px;top:402px;width:695px;height:20px;background:#fff;border-bottom:1px solid #8eabc9"></div>
<div class="a" style="left:65px;top:402px;width:1px;height:20px;background:#8eabc9"></div>
<div class="t" style="left:-119px;width:300.280px;text-align:right;top:404px;font-size:11px;color:#000;letter-spacing:-0.280px;">300007</div>
<div class="a" style="left:185px;top:402px;width:1px;height:20px;background:#8eabc9"></div>
<div class="a" style="left:185px;top:402px;width:96px;height:20px;overflow:hidden">
<div class="t" style="left:6px;top:2px;font-size:11px;color:#000;letter-spacing:-0.500px;">ACTEBIS Comput</div>
</div>
<div class="a" style="left:281px;top:402px;width:1px;height:20px;background:#8eabc9"></div>
<div class="a" style="left:281px;top:402px;width:150px;height:20px;overflow:hidden">
<div class="t" style="left:6px;top:2px;font-size:11px;color:#000;letter-spacing:0.500px;">test2345</div>
</div>
<div class="a" style="left:431px;top:402px;width:1px;height:20px;background:#8eabc9"></div>
<div class="a" style="left:431px;top:402px;width:96px;height:20px;overflow:hidden">
<div class="t" style="left:6px;top:2px;font-size:11px;color:#000;letter-spacing:-0.300px;">1110444</div>
</div>
<div class="a" style="left:527px;top:402px;width:1px;height:20px;background:#8eabc9"></div>
<div class="a" style="left:527px;top:402px;width:96px;height:20px;overflow:hidden">
<div class="t" style="left:6px;top:2px;font-size:11px;color:#000;letter-spacing:-0.300px;">MS 3x WindowsX</div>
</div>
<div class="a" style="left:623px;top:402px;width:1px;height:20px;background:#8eabc9"></div>
<div class="a" style="left:623px;top:402px;width:96px;height:20px;overflow:hidden">
<div class="t" style="left:6px;top:2px;font-size:11px;color:#000;letter-spacing:-0.300px;">asdf</div>
</div>
<div class="a" style="left:719px;top:402px;width:1px;height:20px;background:#8eabc9"></div>
<div class="a" style="left:29px;top:428px;width:17px;height:19px;background:linear-gradient(90deg,#f2f1f7,#dcdbe7 40%,#c2c0d4 75%,#a9a7c0)"></div>
<div class="a" style="left:46px;top:428px;width:120px;height:19px;background:linear-gradient(#f4f3f8,#e0dfea 45%,#cfcde0 75%,#bab8ce);box-shadow:inset 1px 1px 0 #fff"></div>
<div class="a" style="left:46px;top:427px;width:1px;height:20px;background:#3c3b56"></div>
<div class="t" style="left:46px;width:109px;text-align:center;top:431px;font-size:11px;color:#000;letter-spacing:-0.312px;">Lieferantennummer</div>
<svg class="a" style="left:159px;top:436px" width="5" height="3" viewBox="0 0 5 3"><path d="M0 0H5L2.5 3Z" fill="#000"/></svg>
<div class="a" style="left:166px;top:428px;width:96px;height:19px;background:linear-gradient(#f4f3f8,#e0dfea 45%,#cfcde0 75%,#bab8ce);box-shadow:inset 1px 1px 0 #fff"></div>
<div class="a" style="left:166px;top:427px;width:1px;height:20px;background:#3c3b56"></div>
<div class="t" style="left:166px;width:85px;text-align:center;top:431px;font-size:11px;color:#000;letter-spacing:-0.500px;">Name 1</div>
<svg class="a" style="left:255px;top:436px" width="5" height="3" viewBox="0 0 5 3"><path d="M0 0H5L2.5 3Z" fill="#000"/></svg>
<div class="a" style="left:262px;top:428px;width:96px;height:19px;background:linear-gradient(#f4f3f8,#e0dfea 45%,#cfcde0 75%,#bab8ce);box-shadow:inset 1px 1px 0 #fff"></div>
<div class="a" style="left:262px;top:427px;width:1px;height:20px;background:#3c3b56"></div>
<div class="t" style="left:262px;width:85px;text-align:center;top:431px;font-size:11px;color:#000;letter-spacing:-0.500px;">Name 2</div>
<svg class="a" style="left:351px;top:436px" width="5" height="3" viewBox="0 0 5 3"><path d="M0 0H5L2.5 3Z" fill="#000"/></svg>
<div class="a" style="left:358px;top:428px;width:96px;height:19px;background:linear-gradient(#f4f3f8,#e0dfea 45%,#cfcde0 75%,#bab8ce);box-shadow:inset 1px 1px 0 #fff"></div>
<div class="a" style="left:358px;top:427px;width:1px;height:20px;background:#3c3b56"></div>
<div class="t" style="left:358px;width:85px;text-align:center;top:431px;font-size:11px;color:#000;letter-spacing:-0.200px;">Stra&szlig;e</div>
<svg class="a" style="left:447px;top:436px" width="5" height="3" viewBox="0 0 5 3"><path d="M0 0H5L2.5 3Z" fill="#000"/></svg>
<div class="a" style="left:454px;top:428px;width:96px;height:19px;background:linear-gradient(#f4f3f8,#e0dfea 45%,#cfcde0 75%,#bab8ce);box-shadow:inset 1px 1px 0 #fff"></div>
<div class="a" style="left:454px;top:427px;width:1px;height:20px;background:#3c3b56"></div>
<div class="t" style="left:454px;width:85px;text-align:center;top:431px;font-size:11px;color:#000;letter-spacing:-0.500px;">Plz.</div>
<svg class="a" style="left:543px;top:436px" width="5" height="3" viewBox="0 0 5 3"><path d="M0 0H5L2.5 3Z" fill="#000"/></svg>
<div class="a" style="left:550px;top:428px;width:96px;height:19px;background:linear-gradient(#f4f3f8,#e0dfea 45%,#cfcde0 75%,#bab8ce);box-shadow:inset 1px 1px 0 #fff"></div>
<div class="a" style="left:550px;top:427px;width:1px;height:20px;background:#3c3b56"></div>
<div class="t" style="left:550px;width:85px;text-align:center;top:431px;font-size:11px;color:#000;letter-spacing:0.500px;">Ort</div>
<svg class="a" style="left:639px;top:436px" width="5" height="3" viewBox="0 0 5 3"><path d="M0 0H5L2.5 3Z" fill="#000"/></svg>
<div class="a" style="left:646px;top:428px;width:96px;height:19px;background:linear-gradient(#f4f3f8,#e0dfea 45%,#cfcde0 75%,#bab8ce);box-shadow:inset 1px 1px 0 #fff"></div>
<div class="a" style="left:646px;top:427px;width:1px;height:20px;background:#3c3b56"></div>
<div class="t" style="left:646px;width:85px;text-align:center;top:431px;font-size:11px;color:#000;letter-spacing:-0.300px;">Land</div>
<svg class="a" style="left:735px;top:436px" width="5" height="3" viewBox="0 0 5 3"><path d="M0 0H5L2.5 3Z" fill="#000"/></svg>
<div class="a" style="left:742px;top:428px;width:96px;height:19px;background:linear-gradient(#f4f3f8,#e0dfea 45%,#cfcde0 75%,#bab8ce);box-shadow:inset 1px 1px 0 #fff"></div>
<div class="a" style="left:742px;top:427px;width:1px;height:20px;background:#3c3b56"></div>
<div class="a" style="left:29px;top:447px;width:731px;height:1px;background:#44435a"></div>
<div class="a" style="left:28px;top:448px;width:18px;height:20px;background:linear-gradient(90deg,#f2f1f7,#dcdbe7 40%,#c2c0d4 75%,#a9a7c0);border-left:1px dashed #6a90b8;border-bottom:1px dashed #6a90b8"></div>
<div class="a" style="left:46px;top:448px;width:714px;height:20px;background:#fff;border-bottom:1px solid #8eabc9"></div>
<div class="a" style="left:46px;top:448px;width:1px;height:20px;background:#8eabc9"></div>
<div class="t" style="left:-138px;width:300.280px;text-align:right;top:450px;font-size:11px;color:#000;letter-spacing:-0.280px;">300013</div>
<div class="a" style="left:166px;top:448px;width:1px;height:20px;background:#8eabc9"></div>
<div class="a" style="left:166px;top:448px;width:96px;height:20px;overflow:hidden">
<div class="t" style="left:6px;top:2px;font-size:11px;color:#000;letter-spacing:-0.500px;">BRIDGESTONE A</div>
</div>
<div class="a" style="left:262px;top:448px;width:1px;height:20px;background:#8eabc9"></div>
<div class="a" style="left:358px;top:448px;width:1px;height:20px;background:#8eabc9"></div>
<div class="a" style="left:358px;top:448px;width:96px;height:20px;overflow:hidden">
<div class="t" style="left:6px;top:2px;font-size:11px;color:#000;letter-spacing:-0.133px;">Laxenburger Stra</div>
</div>
<div class="a" style="left:454px;top:448px;width:1px;height:20px;background:#8eabc9"></div>
<div class="a" style="left:454px;top:448px;width:96px;height:20px;overflow:hidden">
<div class="t" style="left:6px;top:2px;font-size:11px;color:#000;letter-spacing:-0.300px;">1232</div>
</div>
<div class="a" style="left:550px;top:448px;width:1px;height:20px;background:#8eabc9"></div>
<div class="a" style="left:550px;top:448px;width:96px;height:20px;overflow:hidden">
<div class="t" style="left:6px;top:2px;font-size:11px;color:#000;letter-spacing:-0.300px;">Wien</div>
</div>
<div class="a" style="left:646px;top:448px;width:1px;height:20px;background:#8eabc9"></div>
<div class="a" style="left:646px;top:448px;width:96px;height:20px;overflow:hidden">
<div class="t" style="left:6px;top:2px;font-size:11px;color:#000;letter-spacing:-0.300px;">A</div>
</div>
<div class="a" style="left:742px;top:448px;width:1px;height:20px;background:#8eabc9"></div>
<div class="a" style="left:742px;top:448px;width:96px;height:20px;overflow:hidden">
<div class="t" style="left:6px;top:2px;font-size:11px;color:#000;letter-spacing:-0.300px;">sup</div>
</div>
<div class="a" style="left:28px;top:468px;width:18px;height:20px;background:linear-gradient(90deg,#f2f1f7,#dcdbe7 40%,#c2c0d4 75%,#a9a7c0);border-left:1px dashed #6a90b8;border-bottom:1px dashed #6a90b8"></div>
<div class="a" style="left:46px;top:468px;width:714px;height:20px;background:#fff;border-bottom:1px solid #8eabc9"></div>
<div class="a" style="left:46px;top:468px;width:1px;height:20px;background:#8eabc9"></div>
<div class="t" style="left:-138px;width:300.080px;text-align:right;top:470px;font-size:11px;color:#000;letter-spacing:-0.080px;">911020</div>
<div class="a" style="left:166px;top:468px;width:1px;height:20px;background:#8eabc9"></div>
<div class="a" style="left:166px;top:468px;width:96px;height:20px;overflow:hidden">
<div class="t" style="left:6px;top:2px;font-size:11px;color:#000;letter-spacing:-0.500px;">A. HABERKORN &amp;</div>
</div>
<div class="a" style="left:262px;top:468px;width:1px;height:20px;background:#8eabc9"></div>
<div class="a" style="left:358px;top:468px;width:1px;height:20px;background:#8eabc9"></div>
<div class="a" style="left:358px;top:468px;width:96px;height:20px;overflow:hidden">
<div class="t" style="left:6px;top:2px;font-size:11px;color:#000;letter-spacing:-0.071px;">Werndlstra&szlig;e&nbsp; 3</div>
</div>
<div class="a" style="left:454px;top:468px;width:1px;height:20px;background:#8eabc9"></div>
<div class="a" style="left:454px;top:468px;width:96px;height:20px;overflow:hidden">
<div class="t" style="left:6px;top:2px;font-size:11px;color:#000;letter-spacing:-0.300px;">4240</div>
</div>
<div class="a" style="left:550px;top:468px;width:1px;height:20px;background:#8eabc9"></div>
<div class="a" style="left:646px;top:468px;width:1px;height:20px;background:#8eabc9"></div>
<div class="a" style="left:646px;top:468px;width:96px;height:20px;overflow:hidden">
<div class="t" style="left:6px;top:2px;font-size:11px;color:#000;letter-spacing:-0.300px;">A</div>
</div>
<div class="a" style="left:742px;top:468px;width:1px;height:20px;background:#8eabc9"></div>
<div class="a" style="left:742px;top:468px;width:96px;height:20px;overflow:hidden">
<div class="t" style="left:6px;top:2px;font-size:11px;color:#000;letter-spacing:-0.300px;">sup</div>
</div>
<div class="a" style="left:28px;top:488px;width:18px;height:20px;background:linear-gradient(90deg,#f2f1f7,#dcdbe7 40%,#c2c0d4 75%,#a9a7c0);border-left:1px dashed #6a90b8;border-bottom:1px dashed #6a90b8"></div>
<div class="a" style="left:46px;top:488px;width:714px;height:20px;background:linear-gradient(#f9fbfd,#e6eff8);border-bottom:1px solid #8eabc9"></div>
<div class="a" style="left:46px;top:488px;width:1px;height:20px;background:#8eabc9"></div>
<div class="t" style="left:-138px;width:300.080px;text-align:right;top:490px;font-size:11px;color:#000;letter-spacing:-0.080px;">911061</div>
<div class="a" style="left:166px;top:488px;width:1px;height:20px;background:#8eabc9"></div>
<div class="a" style="left:166px;top:488px;width:96px;height:20px;overflow:hidden">
<div class="t" style="left:6px;top:2px;font-size:11px;color:#000;letter-spacing:-0.100px;">Tixit S. A.</div>
</div>
<div class="a" style="left:262px;top:488px;width:1px;height:20px;background:#8eabc9"></div>
<div class="a" style="left:358px;top:488px;width:1px;height:20px;background:#8eabc9"></div>
<div class="a" style="left:358px;top:488px;width:96px;height:20px;overflow:hidden">
<div class="t" style="left:6px;top:2px;font-size:11px;color:#000;letter-spacing:-0.200px;">78 rue Ferme Fal</div>
</div>
<div class="a" style="left:454px;top:488px;width:1px;height:20px;background:#8eabc9"></div>
<div class="a" style="left:454px;top:488px;width:96px;height:20px;overflow:hidden">
<div class="t" style="left:6px;top:2px;font-size:11px;color:#000;letter-spacing:-0.300px;">67500</div>
</div>
<div class="a" style="left:550px;top:488px;width:1px;height:20px;background:#8eabc9"></div>
<div class="a" style="left:646px;top:488px;width:1px;height:20px;background:#8eabc9"></div>
<div class="a" style="left:646px;top:488px;width:96px;height:20px;overflow:hidden">
<div class="t" style="left:6px;top:2px;font-size:11px;color:#000;letter-spacing:-0.300px;">F</div>
</div>
<div class="a" style="left:742px;top:488px;width:1px;height:20px;background:#8eabc9"></div>
<div class="a" style="left:742px;top:488px;width:96px;height:20px;overflow:hidden">
<div class="t" style="left:6px;top:2px;font-size:11px;color:#000;letter-spacing:-0.300px;">sup</div>
</div>
<div class="a" style="left:28px;top:508px;width:18px;height:20px;background:linear-gradient(90deg,#f2f1f7,#dcdbe7 40%,#c2c0d4 75%,#a9a7c0);border-left:1px dashed #6a90b8;border-bottom:1px dashed #6a90b8"></div>
<div class="a" style="left:46px;top:508px;width:714px;height:20px;background:#fff;border-bottom:1px solid #8eabc9"></div>
<div class="a" style="left:46px;top:508px;width:1px;height:20px;background:#8eabc9"></div>
<div class="t" style="left:-138px;width:300.280px;text-align:right;top:510px;font-size:11px;color:#000;letter-spacing:-0.280px;">916600</div>
<div class="a" style="left:166px;top:508px;width:1px;height:20px;background:#8eabc9"></div>
<div class="a" style="left:166px;top:508px;width:96px;height:20px;overflow:hidden">
<div class="t" style="left:6px;top:2px;font-size:11px;color:#000;letter-spacing:-0.500px;">PALME-Duschabtr</div>
</div>
<div class="a" style="left:262px;top:508px;width:1px;height:20px;background:#8eabc9"></div>
<div class="a" style="left:262px;top:508px;width:96px;height:20px;overflow:hidden">
<div class="t" style="left:6px;top:2px;font-size:11px;color:#000;letter-spacing:-0.150px;">Gesellschaft m.b.</div>
</div>
<div class="a" style="left:358px;top:508px;width:1px;height:20px;background:#8eabc9"></div>
<div class="a" style="left:358px;top:508px;width:96px;height:20px;overflow:hidden">
<div class="t" style="left:6px;top:2px;font-size:11px;color:#000;letter-spacing:-0.217px;">Jechtenham 16</div>
</div>
<div class="a" style="left:454px;top:508px;width:1px;height:20px;background:#8eabc9"></div>
<div class="a" style="left:454px;top:508px;width:96px;height:20px;overflow:hidden">
<div class="t" style="left:6px;top:2px;font-size:11px;color:#000;letter-spacing:-0.300px;">4775</div>
</div>
<div class="a" style="left:550px;top:508px;width:1px;height:20px;background:#8eabc9"></div>
<div class="a" style="left:646px;top:508px;width:1px;height:20px;background:#8eabc9"></div>
<div class="a" style="left:646px;top:508px;width:96px;height:20px;overflow:hidden">
<div class="t" style="left:6px;top:2px;font-size:11px;color:#000;letter-spacing:-0.300px;">A</div>
</div>
<div class="a" style="left:742px;top:508px;width:1px;height:20px;background:#8eabc9"></div>
<div class="a" style="left:742px;top:508px;width:96px;height:20px;overflow:hidden">
<div class="t" style="left:6px;top:2px;font-size:11px;color:#000;letter-spacing:-0.300px;">sup</div>
</div>
<div class="a" style="left:14px;top:282px;width:9px;height:9px;background:#fff;border:1px solid #a0a0a0"></div>
<div class="a" style="left:16px;top:286px;width:5px;height:1px;background:#000"></div>
<div class="a" style="left:24px;top:286px;width:4px;height:1px;background:repeating-linear-gradient(90deg,#8c8c8c 0 1px,transparent 1px 2px)"></div>
<div class="a" style="left:18px;top:292px;width:1px;height:227px;background:repeating-linear-gradient(#8c8c8c 0 1px,transparent 1px 2px)"></div>
<div class="a" style="left:37px;top:296px;width:1px;height:117px;background:repeating-linear-gradient(#8c8c8c 0 1px,transparent 1px 2px)"></div>
<div class="a" style="left:38px;top:332px;width:9px;height:1px;background:repeating-linear-gradient(90deg,#8c8c8c 0 1px,transparent 1px 2px)"></div>
<div class="a" style="left:38px;top:352px;width:9px;height:1px;background:repeating-linear-gradient(90deg,#8c8c8c 0 1px,transparent 1px 2px)"></div>
<div class="a" style="left:38px;top:372px;width:9px;height:1px;background:repeating-linear-gradient(90deg,#8c8c8c 0 1px,transparent 1px 2px)"></div>
<div class="a" style="left:38px;top:392px;width:9px;height:1px;background:repeating-linear-gradient(90deg,#8c8c8c 0 1px,transparent 1px 2px)"></div>
<div class="a" style="left:38px;top:412px;width:9px;height:1px;background:repeating-linear-gradient(90deg,#8c8c8c 0 1px,transparent 1px 2px)"></div>
<div class="a" style="left:14px;top:454px;width:9px;height:9px;background:#fff;border:1px solid #a0a0a0"></div>
<div class="a" style="left:16px;top:458px;width:5px;height:1px;background:#000"></div>
<div class="a" style="left:18px;top:456px;width:1px;height:5px;background:#000"></div>
<div class="a" style="left:24px;top:458px;width:4px;height:1px;background:repeating-linear-gradient(90deg,#8c8c8c 0 1px,transparent 1px 2px)"></div>
<div class="a" style="left:14px;top:474px;width:9px;height:9px;background:#fff;border:1px solid #a0a0a0"></div>
<div class="a" style="left:16px;top:478px;width:5px;height:1px;background:#000"></div>
<div class="a" style="left:18px;top:476px;width:1px;height:5px;background:#000"></div>
<div class="a" style="left:24px;top:478px;width:4px;height:1px;background:repeating-linear-gradient(90deg,#8c8c8c 0 1px,transparent 1px 2px)"></div>
<div class="a" style="left:14px;top:494px;width:9px;height:9px;background:#fff;border:1px solid #a0a0a0"></div>
<div class="a" style="left:16px;top:498px;width:5px;height:1px;background:#000"></div>
<div class="a" style="left:18px;top:496px;width:1px;height:5px;background:#000"></div>
<div class="a" style="left:24px;top:498px;width:4px;height:1px;background:repeating-linear-gradient(90deg,#8c8c8c 0 1px,transparent 1px 2px)"></div>
<div class="a" style="left:14px;top:514px;width:9px;height:9px;background:#fff;border:1px solid #a0a0a0"></div>
<div class="a" style="left:16px;top:518px;width:5px;height:1px;background:#000"></div>
<div class="a" style="left:18px;top:516px;width:1px;height:5px;background:#000"></div>
<div class="a" style="left:24px;top:518px;width:4px;height:1px;background:repeating-linear-gradient(90deg,#8c8c8c 0 1px,transparent 1px 2px)"></div>
</div>
<div class="a" style="left:8px;top:588px;width:7px;height:1px;background:#222"></div>
<div class="a" style="left:33px;top:573px;width:712px;height:17px;background:#f5f5f8"></div>
<div class="a" style="left:15px;top:573px;width:19px;height:17px;background:linear-gradient(#fbfbfb,#ececec 42%,#d8d8d8 50%,#e6e6e6 85%,#f2f2f2);border-left:1px solid #111;border-right:2px solid #1c1c2c;border-bottom:2px solid #1c1c2c;box-shadow:inset 1px 1px 0 #fff"></div>
<svg class="a" style="left:20px;top:578px" width="5" height="8" viewBox="0 0 5 8"><path d="M5 0V8L0 4Z" fill="#fff"/></svg>
<div class="a" style="left:34px;top:573px;width:212px;height:17px;background:linear-gradient(#fefefe,#ececec 35%,#d4d4d4 50%,#e2e2e2 85%,#f6f6f6);border-right:1px solid #555;border-bottom:2px solid #5a5a5a;border-radius:0 2px 2px 0;box-shadow:inset 1px 1px 0 #fff"></div>
<div class="a" style="left:745px;top:573px;width:15px;height:17px;background:linear-gradient(#fbfbfb,#ececec 42%,#d8d8d8 50%,#e6e6e6 85%,#f2f2f2);border-right:2px solid #1c1c2c;border-bottom:2px solid #1c1c2c;box-shadow:inset 1px 1px 0 #fff"></div>
<div class="a" style="left:743px;top:588px;width:2px;height:2px;background:#1c1c2c"></div>
<svg class="a" style="left:750px;top:578px" width="5" height="8" viewBox="0 0 5 8"><path d="M0 0V8L5 4Z" fill="#fff"/></svg>
</body></html>
